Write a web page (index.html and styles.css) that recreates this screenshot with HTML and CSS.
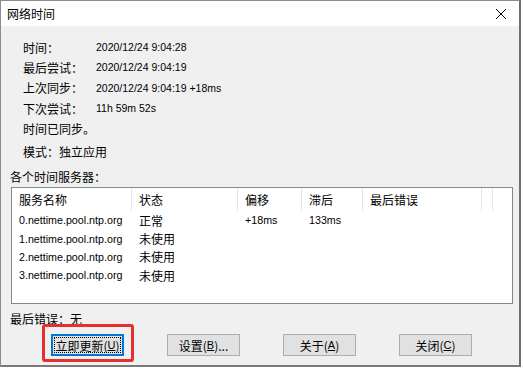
FILE: index.html
```html
<!DOCTYPE html>
<html>
<head>
<meta charset="utf-8">
<title>网络时间</title>
<link rel="stylesheet" href="styles.css">
</head>
<body>
	<div class="win">
		<div class="titlebar">
			<span class="title">网络时间</span>
			<svg class="close" width="12" height="12" viewBox="0 0 12 12"><path d="M1 1L11 11M11 1L1 11" stroke="#000" stroke-width="1" fill="none"/></svg>
		</div>
		<div class="content">
			<div class="info">
				<span class="cn">时间：</span><span class="val">2020/12/24 9:04:28</span>
				<span class="cn">最后尝试：</span><span class="val">2020/12/24 9:04:19</span>
				<span class="cn">上次同步：</span><span class="val">2020/12/24 9:04:19 +18ms</span>
				<span class="cn">下次尝试：</span><span class="val">11h 59m 52s</span>
			</div>
			<p class="cn status">时间已同步。</p>
			<p class="cn mode">模式：独立应用</p>
			<p class="cn servers">各个时间服务器：</p>
			<div class="list">
				<div class="row head">
					<span class="c1 cn">服务名称</span><span class="c2 cn">状态</span><span class="c3 cn">偏移</span><span class="c4 cn">滞后</span><span class="c5 cn">最后错误</span><span class="c6"></span>
				</div>
				<div class="row">
					<span class="c1">0.nettime.pool.ntp.org</span><span class="c2 cn">正常</span><span class="c3">+18ms</span><span class="c4">133ms</span>
				</div>
				<div class="row">
					<span class="c1">1.nettime.pool.ntp.org</span><span class="c2 cn">未使用</span>
				</div>
				<div class="row">
					<span class="c1">2.nettime.pool.ntp.org</span><span class="c2 cn">未使用</span>
				</div>
				<div class="row">
					<span class="c1">3.nettime.pool.ntp.org</span><span class="c2 cn">未使用</span>
				</div>
			</div>
			<p class="cn lasterr">最后错误：无</p>
			<div class="btns">
				<div class="btnwrap">
					<button class="btn focus"><span class="inner">立即更新(<u>U</u>)</span></button>
					<div class="mark"></div>
				</div>
				<button class="btn">设置(<u>B</u>)...</button>
				<button class="btn">关于(<u>A</u>)</button>
				<button class="btn">关闭(<u>C</u>)</button>
			</div>
		</div>
	</div>
</body>
</html>
```

FILE: styles.css
```css
*{margin: 0;padding: 0;box-sizing: border-box;}
body{
	width: 523px;
	height: 369px;
	background: #fff;
	font-family: "Liberation Sans", "Noto Sans CJK SC", sans-serif;
	color: #000;
}
.cn{
	font-family: "Noto Sans CJK SC", "Liberation Sans", sans-serif;
	font-size: 12px;
}
.win{
	width: 521px;
	height: 367px;
	border: 1px solid #8c8c8c;
	border-right: 2px solid #6e6e6e;
	border-bottom: 2px solid #7a7a7a;
	background: #f0f0f0;
}
.titlebar{
	height: 25px;
	background: #fff;
	display: flex;
	align-items: center;
	justify-content: space-between;
	padding: 0 12px 0 6px;
}
.title{
	font-family: "Noto Sans CJK SC", sans-serif;
	font-size: 12px;
}
.content{
	padding: 11px 0 0 9px;
}
.info{
	display: grid;
	grid-template-columns: 73px auto;
	grid-auto-rows: 20.3px;
	align-items: center;
	padding-left: 13px;
}
.val{
	font-size: 10.5px;
}
.status{
	padding-left: 13px;
	line-height: 20px;
	margin-top: 1px;
}
.mode{
	padding-left: 13px;
	line-height: 20px;
	margin-top: 3px;
}
.servers{
	line-height: 20px;
	margin-top: 5px;
}
.list{
	width: 502px;
	height: 117px;
	margin: 0 0 0 1px;
	background: #fff;
	border: 1px solid #828790;
}
.row{
	display: flex;
	height: 18.3px;
	align-items: center;
	font-size: 10.7px;
}
.row.head{
	height: 23px;
	align-items: stretch;
}
.row span{
	flex: none;
	padding-left: 7px;
}
.row.head span{
	display: flex;
	align-items: center;
	border-right: 1px solid #e5e5e5;
}
.c1{width: 120px;}
.c2{width: 106px;}
.c3{width: 64px;}
.c4{width: 61px;}
.c5{width: 119px;}
.c6{width: 11px;}
.lasterr{
	line-height: 20px;
	margin-top: 5px;
}
.btns{
	display: flex;
	gap: 43px;
	padding-left: 41px;
	margin-top: 5px;
}
.btnwrap{
	position: relative;
}
.btn{
	width: 73px;
	height: 22px;
	background: #e1e1e1;
	border: 1px solid #adadad;
	font-family: "Noto Sans CJK SC", "Liberation Sans", sans-serif;
	font-size: 12px;
	color: #000;
	display: flex;
	align-items: center;
	justify-content: center;
}
.btn u{
	font-family: "Liberation Sans", sans-serif;
	font-size: 11px;
}
.btn.focus{
	border: 2px solid #0078d7;
	padding: 1px;
}
.btn.focus .inner{
	display: flex;
	align-items: center;
	justify-content: center;
	width: 100%;
	height: 100%;
	border: 1px dotted #000;
}
.mark{
	position: absolute;
	left: -9px;
	top: -10px;
	right: -10px;
	bottom: -6px;
	border: 3px solid #e5302d;
	border-radius: 3px;
}
```
